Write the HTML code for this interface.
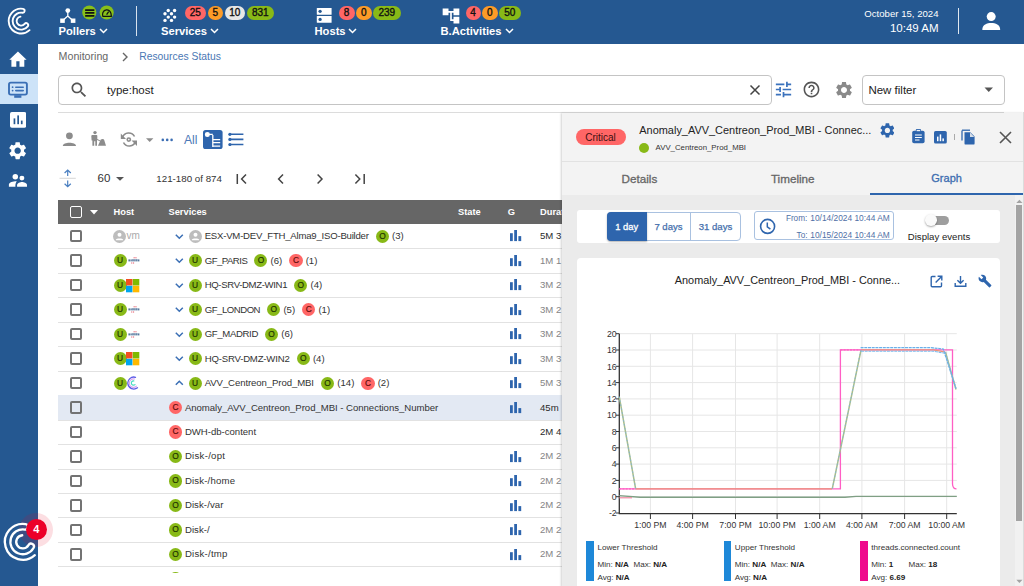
<!DOCTYPE html>
<html><head><meta charset="utf-8">
<style>
*{box-sizing:border-box;margin:0;padding:0}
html,body{width:1024px;height:586px;overflow:hidden;background:#fff;font-family:"Liberation Sans",sans-serif;color:#222}
.a{position:absolute}
#hdr{position:absolute;left:0;top:0;width:1024px;height:44px;background:#255891}
#side{position:absolute;left:0;top:44px;width:38px;height:542px;background:#255891}
.nav{position:absolute;color:#fff;font-weight:bold;font-size:11.2px;white-space:nowrap;line-height:12px}
.bdg{position:absolute;top:5.7px;height:14px;border-radius:7px;font-size:10px;line-height:14.4px;text-align:center;color:#111;-webkit-text-stroke:0.35px #111}
.r{background:#ff6666}.o{background:#fd9b27}.g{background:#e6e6e6}.gr{background:#88b917}
.t{position:absolute;white-space:nowrap}
.cb{position:absolute;width:13.2px;height:13.2px;border-radius:50%;font-size:8.4px;line-height:13.4px;text-align:center;-webkit-text-stroke:0.15px}
.chk{position:absolute;width:12.6px;height:12.6px;border:2px solid #737373;border-radius:2px}
.th{position:absolute;top:6.5px;color:#fff;font-weight:bold;font-size:9.3px;white-space:nowrap}
.tt{position:absolute;white-space:nowrap;font-size:9.6px;color:#333;line-height:12px}
.tab{position:absolute;top:172.4px;font-size:11.7px;color:#666;white-space:nowrap;line-height:13px;-webkit-text-stroke:0.3px}
.lg{position:absolute;white-space:nowrap;font-size:8.1px;color:#333;line-height:10px}
.lg b{color:#222}
</style></head><body>
<div id="hdr">
  <svg class="a" style="left:0;top:0" width="38" height="44">
    <path fill="none" stroke="#fff" stroke-width="1.9" stroke-linecap="round" d="M29.56 30.17 A12.40 12.40 0 1 1 23.04 8.85 A1.95 1.95 0 0 1 22.43 12.70 A8.50 8.50 0 1 0 27.80 26.33 A2.00 2.00 0 0 0 24.65 23.87 A4.50 4.50 0 1 1 20.47 16.64"/>
  </svg>
  <!-- Pollers -->
  <svg class="a" style="left:60px;top:8px" width="16" height="16" viewBox="0 0 16 16">
    <circle cx="7.8" cy="2.6" r="2.4" fill="#fff"/>
    <path d="M7.8 3 V8 L2.5 12.8 M7.8 8 L13 12.8" stroke="#fff" stroke-width="1.3" fill="none"/>
    <rect x="0.2" y="10.5" width="4.6" height="4.4" fill="#fff"/>
    <rect x="10.8" y="10.5" width="4.6" height="4.4" fill="#fff"/>
  </svg>
  <svg class="a" style="left:80px;top:4px" width="36" height="18" viewBox="0 0 36 18">
    <circle cx="9.3" cy="8.5" r="7.05" fill="#88c01a"/><circle cx="26.7" cy="8.5" r="7.05" fill="#88c01a"/>
    <g fill="#111"><rect x="5.1" y="5.3" width="9.3" height="1.7" rx="0.3"/><rect x="5.1" y="8.1" width="9.3" height="1.7" rx="0.3"/><rect x="5.1" y="11.1" width="9.3" height="1.7" rx="0.3"/></g>
    <path d="M22.8 12.3 C22.2 10.5 22.5 6.2 26.5 5.9 C29.5 5.8 30.5 8 31 9.5 L31.4 12.3 Z" fill="none" stroke="#111" stroke-width="1.2" stroke-linejoin="round"/>
    <path d="M26.6 10.6 L28.7 7.6" stroke="#111" stroke-width="1.3"/>
  </svg>
  <div class="nav" style="left:58.5px;top:25px">Pollers</div>
  <svg class="a" style="left:98.5px;top:28px" width="9" height="6"><path d="M1 1 L4.5 4.5 L8 1" stroke="#fff" stroke-width="1.5" fill="none"/></svg>
  <div class="a" style="left:136px;top:6px;width:1px;height:30px;background:#d8e2ee"></div>
  <!-- Services -->
  <svg class="a" style="left:158px;top:4px" width="24" height="24" viewBox="0 0 24 24">
    <g fill="#fff"><circle cx="10.25" cy="6.56" r="1.7"/><circle cx="16.6" cy="6.56" r="1.7"/>
    <circle cx="7" cy="9.8" r="1.7"/><circle cx="13.5" cy="9.8" r="1.7"/>
    <circle cx="10.25" cy="13.1" r="1.7"/><circle cx="16.6" cy="13.1" r="1.7"/>
    <circle cx="7" cy="16.4" r="1.7"/><circle cx="13.5" cy="16.4" r="1.7"/></g>
  </svg>
  <div class="bdg r" style="left:184.5px;width:21.5px">25</div>
  <div class="bdg o" style="left:207.5px;width:15.5px">5</div>
  <div class="bdg g" style="left:224.5px;width:20.5px">10</div>
  <div class="bdg gr" style="left:246.5px;width:27.5px">831</div>
  <div class="nav" style="left:161px;top:25px">Services</div>
  <svg class="a" style="left:210px;top:28px" width="9" height="6"><path d="M1 1 L4.5 4.5 L8 1" stroke="#fff" stroke-width="1.5" fill="none"/></svg>
  <!-- Hosts -->
  <svg class="a" style="left:310px;top:4px" width="30" height="22" viewBox="310 4 30 22">
    <rect x="316.8" y="7.9" width="14.8" height="6.8" rx="0.5" fill="#fff"/>
    <rect x="316.8" y="16.1" width="14.8" height="6.7" rx="0.5" fill="#fff"/>
    <circle cx="320.1" cy="11.3" r="1.65" fill="#255891"/><circle cx="320.1" cy="19.4" r="1.65" fill="#255891"/>
  </svg>
  <div class="bdg r" style="left:338.5px;width:16px">8</div>
  <div class="bdg o" style="left:356px;width:15.5px">0</div>
  <div class="bdg gr" style="left:373px;width:27.5px">239</div>
  <div class="nav" style="left:314.5px;top:25px">Hosts</div>
  <svg class="a" style="left:348px;top:28px" width="9" height="6"><path d="M1 1 L4.5 4.5 L8 1" stroke="#fff" stroke-width="1.5" fill="none"/></svg>
  <!-- BA -->
  <svg class="a" style="left:440.5px;top:5.9px" width="20" height="20" viewBox="0 0 24 24"><path fill="#fff" d="M22 11V3h-7v3H9V3H2v8h7V8h2v10h4v3h7v-8h-7v3h-2V8h2v3z"/></svg>
  <div class="bdg r" style="left:465.5px;width:15px">4</div>
  <div class="bdg o" style="left:482px;width:15.5px">0</div>
  <div class="bdg gr" style="left:499px;width:21.5px">50</div>
  <div class="nav" style="left:440.5px;top:25px">B.Activities</div>
  <svg class="a" style="left:505px;top:28px" width="9" height="6"><path d="M1 1 L4.5 4.5 L8 1" stroke="#fff" stroke-width="1.5" fill="none"/></svg>
  <!-- date -->
  <div class="t" style="right:85.5px;top:7.6px;color:#fff;font-size:9.6px">October 15, 2024</div>
  <div class="t" style="right:85.5px;top:22.4px;color:#fff;font-size:11.5px">10:49 AM</div>
  <div class="a" style="left:957.5px;top:8px;width:1px;height:26px;background:#e0e8f0"></div>
  <svg class="a" style="left:982px;top:12px" width="19" height="19" viewBox="0 0 19 19">
    <circle cx="9.2" cy="4.6" r="4.5" fill="#fff"/>
    <path d="M0.3 18 C0.3 12.5 5 11 9.2 11 C13.4 11 18.2 12.5 18.2 18 Z" fill="#fff"/>
  </svg>
</div>
<div id="side">
  <svg class="a" style="left:4px;top:2px" width="30" height="28" viewBox="4 46 30 28"><path d="M17.95 51.4 L26.6 59.7 H24.3 V66.8 H19.5 V61.3 H16.3 V66.8 H11.4 V59.7 H9.3 Z" fill="#fff"/></svg>
  <div class="a" style="left:0;top:30px;width:38px;height:30px;background:#cde3f8"></div>
  <svg class="a" style="left:4px;top:30px" width="30" height="30" viewBox="4 74 30 30">
    <rect x="9" y="82.6" width="17.9" height="12" rx="1.8" fill="none" stroke="#3a6fb5" stroke-width="1.9"/>
    <rect x="14.2" y="95.2" width="7.2" height="2.6" fill="#3a6fb5"/>
    <g fill="#3a6fb5"><circle cx="12.6" cy="87.2" r="0.9"/><circle cx="12.6" cy="90.6" r="0.9"/><rect x="15" y="86.4" width="9" height="1.6" rx="0.8"/><rect x="15" y="89.8" width="9" height="1.6" rx="0.8"/></g>
  </svg>
  <svg class="a" style="left:9.9px;top:68px" width="16.2" height="15.8" viewBox="0 0 16.2 15.8"><rect x="0" y="0" width="16.2" height="15.8" rx="1.8" fill="#fff"/><rect x="3.6" y="6.4" width="1.7" height="5.8" fill="#255891"/><rect x="7.3" y="3.4" width="1.7" height="8.8" fill="#255891"/><rect x="10.9" y="8.6" width="1.7" height="3.6" fill="#255891"/></svg>
  <svg class="a" style="left:7.15px;top:95.6px" width="21.3" height="21.3" viewBox="0 0 24 24"><path fill="#fff" d="M19.14 12.94c.04-.3.06-.61.06-.94 0-.32-.02-.64-.07-.94l2.03-1.58c.18-.14.23-.41.12-.61l-1.92-3.32c-.12-.22-.37-.29-.59-.22l-2.39.96c-.5-.38-1.03-.7-1.62-.94l-.36-2.54c-.04-.24-.24-.41-.48-.41h-3.84c-.24 0-.43.17-.47.41l-.36 2.54c-.59.24-1.13.57-1.62.94l-2.39-.96c-.22-.08-.47 0-.59.22L2.74 8.87c-.12.21-.08.47.12.61l2.03 1.58c-.05.3-.09.63-.09.94s.02.64.07.94l-2.03 1.58c-.18.14-.23.41-.12.61l1.92 3.32c.12.22.37.29.59.22l2.39-.96c.5.38 1.03.7 1.62.94l.36 2.54c.05.24.24.41.48.41h3.84c.24 0 .44-.17.47-.41l.36-2.54c.59-.24 1.13-.56 1.62-.94l2.39.96c.22.08.47 0 .59-.22l1.92-3.32c.12-.22.07-.47-.12-.61l-2.01-1.58zM12 15.6c-1.98 0-3.6-1.62-3.6-3.6s1.62-3.6 3.6-3.6 3.6 1.62 3.6 3.6-1.62 3.6-3.6 3.6z"/></svg>
  <svg class="a" style="left:4px;top:122px" width="30" height="30" viewBox="4 166 30 30"><g fill="#fff">
    <circle cx="15.3" cy="176.8" r="2.75"/><circle cx="21.9" cy="178.1" r="2.45"/>
    <path d="M8.9 186.7 V184.6 C8.9 182.2 13.5 181.1 16.8 181.2 C15.6 182.6 15.3 184.6 15.4 186.7 Z"/>
    <path d="M17.1 186.7 V185.2 C17.1 183 20.4 182.1 22 182.1 C23.8 182.1 27 183 27 185.2 V186.7 Z"/></g></svg>
  <div class="a" style="left:36.3px;top:485.5px;width:34px;height:34px;margin:-17px 0 0 -17px;border-radius:50%;background:rgba(232,0,30,0.13)"></div>
  <svg class="a" style="left:0;top:456px" width="40" height="86" viewBox="0 500 40 86">
    <path fill="none" stroke="#fff" stroke-width="2.3" stroke-linecap="round" d="M34.82 555.15 A17.96 17.96 0 1 1 25.61 524.06 A2.77 2.77 0 0 1 24.74 529.54 A12.41 12.41 0 1 0 33.55 548.00 A2.92 2.92 0 0 0 28.49 545.08 A6.57 6.57 0 1 1 22.23 535.26"/>
  </svg>
</div>
<div class="a" style="left:36.3px;top:529.5px;width:21.5px;height:21.5px;margin:-10.75px 0 0 -10.75px;border-radius:50%;background:#ec0028;color:#fff;font-size:11px;font-weight:bold;text-align:center;line-height:21.5px">4</div>
<!-- breadcrumb -->
<div class="t" style="left:58.6px;top:49.9px;font-size:10.65px;color:#666;line-height:12px">Monitoring</div>
<svg class="a" style="left:121px;top:51.5px" width="8" height="10"><path d="M2 1 L6 5 L2 9" stroke="#666" stroke-width="1.4" fill="none"/></svg>
<div class="t" style="left:139.2px;top:50.9px;font-size:10.35px;color:#4a77b4;line-height:12px">Resources Status</div>
<!-- search -->
<div class="a" style="left:58px;top:75px;width:714px;height:30px;border:1px solid #c4c4c4;border-radius:4px"></div>
<svg class="a" style="left:69px;top:80px" width="20" height="20" viewBox="0 0 24 24"><path fill="#555" d="M15.5 14h-.79l-.28-.27C15.41 12.59 16 11.11 16 9.5 16 5.91 13.09 3 9.5 3S3 5.91 3 9.5 5.91 16 9.5 16c1.61 0 3.09-.59 4.23-1.57l.27.28v.79l5 4.99L20.49 19l-4.99-5zm-6 0C7.01 14 5 11.99 5 9.5S7.01 5 9.5 5 14 7.01 14 9.5 11.99 14 9.5 14z"/></svg>
<div class="t" style="left:107px;top:84px;font-size:11.5px;color:#222">type:host</div>
<svg class="a" style="left:748px;top:83px" width="14" height="14" viewBox="0 0 14 14"><path d="M2.5 2.5 L11.5 11.5 M11.5 2.5 L2.5 11.5" stroke="#444" stroke-width="1.5"/></svg>
<svg class="a" style="left:774.5px;top:80.5px" width="17" height="17" viewBox="2 2 20 20"><path fill="#3b72bd" d="M3 17v2h6v-2H3zM3 5v2h10V5H3zm10 16v-2h8v-2h-8v-2h-2v6h2zM7 9v2H3v2h4v2h2V9H7zm14 4v-2H11v2h10zm-6-4h2V7h4V5h-4V3h-2v6z"/></svg>
<svg class="a" style="left:802px;top:80px" width="19" height="19" viewBox="0 0 24 24"><path fill="#555" d="M11 18h2v-2h-2v2zm1-16C6.48 2 2 6.48 2 12s4.48 10 10 10 10-4.48 10-10S17.52 2 12 2zm0 18c-4.41 0-8-3.59-8-8s3.59-8 8-8 8 3.59 8 8-3.59 8-8 8zm0-14c-2.21 0-4 1.79-4 4h2c0-1.1.9-2 2-2s2 .9 2 2c0 2-3 1.75-3 5h2c0-2.25 3-2.5 3-5 0-2.21-1.79-4-4-4z"/></svg>
<svg class="a" style="left:833.5px;top:80px" width="20" height="20" viewBox="0 0 24 24"><path fill="#8a8a8a" d="M19.14 12.94c.04-.3.06-.61.06-.94 0-.32-.02-.64-.07-.94l2.03-1.58c.18-.14.23-.41.12-.61l-1.92-3.32c-.12-.22-.37-.29-.59-.22l-2.39.96c-.5-.38-1.030-.7-1.62-.94l-.36-2.54c-.04-.24-.24-.41-.48-.41h-3.84c-.24 0-.43.17-.47.41l-.36 2.54c-.59.24-1.13.57-1.62.94l-2.39-.96c-.22-.08-.47 0-.59.22L2.74 8.87c-.12.21-.08.47.12.61l2.03 1.58c-.05.3-.09.63-.09.94s.02.64.07.94l-2.03 1.58c-.18.14-.23.41-.12.61l1.92 3.32c.12.22.37.29.59.22l2.39-.96c.5.38 1.03.7 1.62.94l.36 2.54c.05.24.24.41.48.41h3.84c.24 0 .44-.17.47-.41l.36-2.54c.59-.24 1.13-.56 1.62-.94l2.39.96c.22.08.47 0 .59-.22l1.92-3.32c.12-.22.07-.47-.12-.61l-2.01-1.58zM12 15.6c-1.98 0-3.6-1.62-3.6-3.6s1.62-3.6 3.6-3.6 3.6 1.62 3.6 3.6-1.62 3.6-3.6 3.6z"/></svg>
<div class="a" style="left:861.5px;top:75px;width:143px;height:30px;border:1px solid #c4c4c4;border-radius:4px"></div>
<div class="t" style="left:868.4px;top:83.6px;font-size:11.5px;color:#222">New filter</div>
<svg class="a" style="left:984px;top:87px" width="10" height="6"><path d="M0.5 0.5 H9 L4.75 5 Z" fill="#555"/></svg>
<div class="a" style="left:58px;top:112px;width:946px;height:1px;background:#dcdcdc"></div>
<!-- toolbar -->
<svg class="a" style="left:62px;top:131px" width="15" height="16" viewBox="0 0 15 16"><circle cx="7.4" cy="4.8" r="3.4" fill="#8c8c8c"/><path d="M0.8 15 C0.8 10.6 14 10.6 14 15 Z" fill="#8c8c8c"/></svg>
<svg class="a" style="left:86px;top:128px" width="24" height="22" viewBox="86 128 24 22"><g fill="#8c8c8c"><circle cx="95" cy="132.6" r="1.7"/><path d="M92.3 135 H96.6 Q97.3 135 97.3 135.8 V139 L100.3 140.6 L99.9 141.3 L97 140 V145.8 H95.3 V141.2 H94.2 V145.8 H92.4 V140.6 L91.6 140.4 L91.3 136 Q91.4 135 92.3 135 Z"/><path d="M98 145.8 L100.6 139.8 Q101.5 138.9 102.9 139 Q103.7 139.2 104.2 140 L106 145.8 Z"/></g></svg>
<svg class="a" style="left:119.5px;top:131px" width="18" height="17" viewBox="0 0 18 17"><g fill="none" stroke="#8c8c8c" stroke-width="1.6"><path d="M2.5 6.5 A6.5 6.5 0 0 1 14.5 5.5"/><path d="M15.5 10.5 A6.5 6.5 0 0 1 3.5 11.5"/><circle cx="8.8" cy="8.6" r="1.6"/></g><path d="M0.8 2.5 V8 H6 Z" fill="#8c8c8c"/><path d="M17 15 V9.5 H11.5 Z" fill="#8c8c8c"/></svg>
<svg class="a" style="left:145.5px;top:137.5px" width="8" height="5"><path d="M0 0.2 H7.4 L3.7 4 Z" fill="#8c8c8c"/></svg>
<svg class="a" style="left:161px;top:138.2px" width="13" height="4"><g fill="#3a6db3"><circle cx="1.8" cy="1.9" r="1.3"/><circle cx="6.2" cy="1.9" r="1.3"/><circle cx="10.6" cy="1.9" r="1.3"/></g></svg>
<div class="t" style="left:184px;top:133px;font-size:12.1px;color:#4b78b7">All</div>
<svg class="a" style="left:203.3px;top:129.9px" width="20" height="19.2" viewBox="0 0 20 19.2"><rect x="0" y="0" width="19.6" height="19" rx="2.6" fill="#2e65ad"/><circle cx="4.4" cy="4.4" r="2.5" fill="#fff"/><path d="M9.8 5 V17 M9.8 9.7 H17.2 M9.8 12.7 H17.2 M9.8 16.1 H17.2" stroke="#fff" stroke-width="1.3" fill="none"/><path d="M4.4 4.4 H9.8" stroke="#fff" stroke-width="1.3"/></svg>
<svg class="a" style="left:228px;top:132px" width="16" height="14" viewBox="0 0 16 14"><g fill="#2e65ad"><circle cx="1.9" cy="2.3" r="1.6"/><circle cx="1.9" cy="7.4" r="1.6"/><circle cx="1.9" cy="12.5" r="1.6"/></g><path d="M2 2.3 H15.4 M2 7.4 H15.4 M2 12.5 H15.4" stroke="#2e65ad" stroke-width="1.6"/></svg>
<!-- pagination -->
<svg class="a" style="left:59px;top:169px" width="17" height="19" viewBox="0 0 17 19"><path d="M8.7 1.2 V7 M5.6 4 L8.7 1 L11.8 4" stroke="#4a7fc1" stroke-width="1.2" fill="none"/><path d="M8.7 11.5 V17.5 M5.6 14.7 L8.7 17.7 L11.8 14.7" stroke="#4a7fc1" stroke-width="1.2" fill="none"/><path d="M0.5 9.3 H16.8" stroke="#ccc" stroke-width="0.8"/></svg>
<div class="t" style="left:97.6px;top:172px;font-size:11.5px;color:#333">60</div>
<svg class="a" style="left:116px;top:177px" width="9" height="5"><path d="M0 0 H8 L4 3.8 Z" fill="#555"/></svg>
<div class="t" style="left:156.3px;top:172.6px;font-size:9.75px;color:#333">121-180 of 874</div>
<svg class="a" style="left:235px;top:173px" width="14" height="12" viewBox="0 0 14 12"><path d="M2.3 1 V11 M11 1.4 L6.6 6 L11 10.6" stroke="#444" stroke-width="1.5" fill="none"/></svg>
<svg class="a" style="left:275px;top:173px" width="12" height="12" viewBox="0 0 12 12"><path d="M8 1.4 L3.6 6 L8 10.6" stroke="#444" stroke-width="1.5" fill="none"/></svg>
<svg class="a" style="left:313.5px;top:173px" width="12" height="12" viewBox="0 0 12 12"><path d="M3.6 1.4 L8 6 L3.6 10.6" stroke="#444" stroke-width="1.5" fill="none"/></svg>
<svg class="a" style="left:352.5px;top:173px" width="14" height="12" viewBox="0 0 14 12"><path d="M2.4 1.4 L6.8 6 L2.4 10.6 M11.2 1 V11" stroke="#444" stroke-width="1.5" fill="none"/></svg>
<div id="tbl" class="a" style="left:58px;top:200px;width:504px;height:373.3px;overflow:hidden">
<div class="a" style="left:0;top:0;width:504px;height:24.3px;background:#666"></div>
<div class="chk" style="left:11.6px;top:5.8px;border-color:#fff;border-width:1.6px"></div>
<svg class="a" style="left:32px;top:10px" width="8" height="5"><path d="M0 0 H8 L4 4.5 Z" fill="#fff"/></svg>
<div class="th" style="left:55.5px">Host</div>
<div class="th" style="left:110.5px">Services</div>
<div class="th" style="left:400px">State</div>
<div class="th" style="left:449.8px">G</div>
<div class="th" style="left:482px">Duration</div>
<div class="a" style="left:0;top:48.18px;width:504px;height:1px;background:#e2e2e2"></div>
<div class="chk" style="left:11.6px;top:29.84px"></div>
<svg class="a" style="left:55.30px;top:29.64px" width="13" height="13" viewBox="0 0 13 13"><circle cx="6.5" cy="6.5" r="6.5" fill="#bdbdbd"/><circle cx="6.5" cy="4.8" r="2" fill="#fff"/><path d="M2.8 9.8 C3.2 7.9 9.8 7.9 10.2 9.8 V10.3 H2.8 Z" fill="#fff"/></svg>
<div class="tt" style="left:68.5px;top:30.14px;color:#aaa;font-size:10px">vm</div>
<svg class="a" style="left:116.5px;top:33.64px" width="9" height="6"><path d="M0.8 0.8 L4.3 4.3 L7.8 0.8" stroke="#3b6fb5" stroke-width="1.5" fill="none"/></svg>
<svg class="a" style="left:130.50px;top:29.64px" width="13" height="13" viewBox="0 0 13 13"><circle cx="6.5" cy="6.5" r="6.5" fill="#bdbdbd"/><circle cx="6.5" cy="4.8" r="2" fill="#fff"/><path d="M2.8 9.8 C3.2 7.9 9.8 7.9 10.2 9.8 V10.3 H2.8 Z" fill="#fff"/></svg>
<div class="tt" style="left:146.70px;top:30.14px;letter-spacing:-0.223px">ESX-VM-DEV_FTH_Alma9_ISO-Builder</div>
<div class="cb" style="left:317.80px;top:29.64px;background:#88b917;color:#1c3000">O</div>
<div class="tt" style="left:334.10px;top:30.14px">(3)</div>
<svg class="a" style="left:451.60px;top:30.44px" width="12" height="12" viewBox="0 0 12 12"><rect x="0" y="3.2" width="2.8" height="7.9" fill="#2e65ad"/><rect x="4.2" y="0" width="2.8" height="11.1" fill="#2e65ad"/><rect x="8.4" y="6.1" width="2.8" height="5" fill="#2e65ad"/></svg>
<div class="tt" style="left:482px;top:30.14px;color:#2a2a2a">5M 3</div>
<div class="a" style="left:0;top:72.66px;width:504px;height:1px;background:#e2e2e2"></div>
<div class="chk" style="left:11.6px;top:54.32px"></div>
<div class="cb" style="left:55.50px;top:54.12px;background:#88b917;color:#1c3000">U</div>
<svg class="a" style="left:69.5px;top:56.12px" width="12" height="9" viewBox="0 0 12 9"><g fill="#3d6590" opacity="0.85"><rect x="0.4" y="3.4" width="1.6" height="2"/><rect x="2.4" y="3.4" width="1.4" height="2"/><rect x="4.2" y="3.2" width="1.6" height="2.2"/><rect x="6.2" y="3.2" width="1.5" height="2.2"/><rect x="8.1" y="3.2" width="1.5" height="2.2"/><rect x="10" y="3.4" width="1.4" height="2"/></g><g fill="#e8707e" opacity="0.85"><rect x="5.6" y="1" width="1.1" height="1.4"/><rect x="7.4" y="1" width="1.1" height="1.4"/><rect x="3.2" y="6.3" width="1.1" height="1.4"/><rect x="5" y="6.3" width="1.1" height="1.4"/></g></svg>
<svg class="a" style="left:116.5px;top:58.12px" width="9" height="6"><path d="M0.8 0.8 L4.3 4.3 L7.8 0.8" stroke="#3b6fb5" stroke-width="1.5" fill="none"/></svg>
<div class="cb" style="left:130.50px;top:54.12px;background:#88b917;color:#1c3000">U</div>
<div class="tt" style="left:146.70px;top:54.62px;letter-spacing:-0.521px">GF_PARIS</div>
<div class="cb" style="left:196.30px;top:54.12px;background:#88b917;color:#1c3000">O</div>
<div class="tt" style="left:212.60px;top:54.62px">(6)</div>
<div class="cb" style="left:231.33px;top:54.12px;background:#ff6666;color:#5a0a0a">C</div>
<div class="tt" style="left:247.63px;top:54.62px">(1)</div>
<svg class="a" style="left:451.60px;top:54.92px" width="12" height="12" viewBox="0 0 12 12"><rect x="0" y="3.2" width="2.8" height="7.9" fill="#2e65ad"/><rect x="4.2" y="0" width="2.8" height="11.1" fill="#2e65ad"/><rect x="8.4" y="6.1" width="2.8" height="5" fill="#2e65ad"/></svg>
<div class="tt" style="left:482px;top:54.62px;color:#858585">1M 1</div>
<div class="a" style="left:0;top:97.14px;width:504px;height:1px;background:#e2e2e2"></div>
<div class="chk" style="left:11.6px;top:78.80px"></div>
<div class="cb" style="left:55.50px;top:78.60px;background:#88b917;color:#1c3000">U</div>
<svg class="a" style="left:68.4px;top:78.50px" width="14" height="14" viewBox="0 0 14 14"><rect x="0" y="0" width="6.5" height="6.5" fill="#f25022"/><rect x="6.8" y="0" width="6.5" height="6.5" fill="#7fba00"/><rect x="0" y="6.8" width="6.5" height="6.5" fill="#00a4ef"/><rect x="6.8" y="6.8" width="6.5" height="6.5" fill="#ffb900"/></svg>
<svg class="a" style="left:116.5px;top:82.60px" width="9" height="6"><path d="M0.8 0.8 L4.3 4.3 L7.8 0.8" stroke="#3b6fb5" stroke-width="1.5" fill="none"/></svg>
<div class="cb" style="left:130.50px;top:78.60px;background:#88b917;color:#1c3000">U</div>
<div class="tt" style="left:146.70px;top:79.10px;letter-spacing:-0.355px">HQ-SRV-DMZ-WIN1</div>
<div class="cb" style="left:236.20px;top:78.60px;background:#88b917;color:#1c3000">O</div>
<div class="tt" style="left:252.50px;top:79.10px">(4)</div>
<svg class="a" style="left:451.60px;top:79.40px" width="12" height="12" viewBox="0 0 12 12"><rect x="0" y="3.2" width="2.8" height="7.9" fill="#2e65ad"/><rect x="4.2" y="0" width="2.8" height="11.1" fill="#2e65ad"/><rect x="8.4" y="6.1" width="2.8" height="5" fill="#2e65ad"/></svg>
<div class="tt" style="left:482px;top:79.10px;color:#858585">3M 2</div>
<div class="a" style="left:0;top:121.62px;width:504px;height:1px;background:#e2e2e2"></div>
<div class="chk" style="left:11.6px;top:103.28px"></div>
<div class="cb" style="left:55.50px;top:103.08px;background:#88b917;color:#1c3000">U</div>
<svg class="a" style="left:69.5px;top:105.08px" width="12" height="9" viewBox="0 0 12 9"><g fill="#3d6590" opacity="0.85"><rect x="0.4" y="3.4" width="1.6" height="2"/><rect x="2.4" y="3.4" width="1.4" height="2"/><rect x="4.2" y="3.2" width="1.6" height="2.2"/><rect x="6.2" y="3.2" width="1.5" height="2.2"/><rect x="8.1" y="3.2" width="1.5" height="2.2"/><rect x="10" y="3.4" width="1.4" height="2"/></g><g fill="#e8707e" opacity="0.85"><rect x="5.6" y="1" width="1.1" height="1.4"/><rect x="7.4" y="1" width="1.1" height="1.4"/><rect x="3.2" y="6.3" width="1.1" height="1.4"/><rect x="5" y="6.3" width="1.1" height="1.4"/></g></svg>
<svg class="a" style="left:116.5px;top:107.08px" width="9" height="6"><path d="M0.8 0.8 L4.3 4.3 L7.8 0.8" stroke="#3b6fb5" stroke-width="1.5" fill="none"/></svg>
<div class="cb" style="left:130.50px;top:103.08px;background:#88b917;color:#1c3000">U</div>
<div class="tt" style="left:146.70px;top:103.58px;letter-spacing:-0.482px">GF_LONDON</div>
<div class="cb" style="left:209.10px;top:103.08px;background:#88b917;color:#1c3000">O</div>
<div class="tt" style="left:225.40px;top:103.58px">(5)</div>
<div class="cb" style="left:244.13px;top:103.08px;background:#ff6666;color:#5a0a0a">C</div>
<div class="tt" style="left:260.43px;top:103.58px">(1)</div>
<svg class="a" style="left:451.60px;top:103.88px" width="12" height="12" viewBox="0 0 12 12"><rect x="0" y="3.2" width="2.8" height="7.9" fill="#2e65ad"/><rect x="4.2" y="0" width="2.8" height="11.1" fill="#2e65ad"/><rect x="8.4" y="6.1" width="2.8" height="5" fill="#2e65ad"/></svg>
<div class="tt" style="left:482px;top:103.58px;color:#858585">3M 2</div>
<div class="a" style="left:0;top:146.10px;width:504px;height:1px;background:#e2e2e2"></div>
<div class="chk" style="left:11.6px;top:127.76px"></div>
<div class="cb" style="left:55.50px;top:127.56px;background:#88b917;color:#1c3000">U</div>
<svg class="a" style="left:69.5px;top:129.56px" width="12" height="9" viewBox="0 0 12 9"><g fill="#3d6590" opacity="0.85"><rect x="0.4" y="3.4" width="1.6" height="2"/><rect x="2.4" y="3.4" width="1.4" height="2"/><rect x="4.2" y="3.2" width="1.6" height="2.2"/><rect x="6.2" y="3.2" width="1.5" height="2.2"/><rect x="8.1" y="3.2" width="1.5" height="2.2"/><rect x="10" y="3.4" width="1.4" height="2"/></g><g fill="#e8707e" opacity="0.85"><rect x="5.6" y="1" width="1.1" height="1.4"/><rect x="7.4" y="1" width="1.1" height="1.4"/><rect x="3.2" y="6.3" width="1.1" height="1.4"/><rect x="5" y="6.3" width="1.1" height="1.4"/></g></svg>
<svg class="a" style="left:116.5px;top:131.56px" width="9" height="6"><path d="M0.8 0.8 L4.3 4.3 L7.8 0.8" stroke="#3b6fb5" stroke-width="1.5" fill="none"/></svg>
<div class="cb" style="left:130.50px;top:127.56px;background:#88b917;color:#1c3000">U</div>
<div class="tt" style="left:146.70px;top:128.06px;letter-spacing:-0.359px">GF_MADRID</div>
<div class="cb" style="left:207.00px;top:127.56px;background:#88b917;color:#1c3000">O</div>
<div class="tt" style="left:223.30px;top:128.06px">(6)</div>
<svg class="a" style="left:451.60px;top:128.36px" width="12" height="12" viewBox="0 0 12 12"><rect x="0" y="3.2" width="2.8" height="7.9" fill="#2e65ad"/><rect x="4.2" y="0" width="2.8" height="11.1" fill="#2e65ad"/><rect x="8.4" y="6.1" width="2.8" height="5" fill="#2e65ad"/></svg>
<div class="tt" style="left:482px;top:128.06px;color:#858585">3M 2</div>
<div class="a" style="left:0;top:170.58px;width:504px;height:1px;background:#e2e2e2"></div>
<div class="chk" style="left:11.6px;top:152.24px"></div>
<div class="cb" style="left:55.50px;top:152.04px;background:#88b917;color:#1c3000">U</div>
<svg class="a" style="left:68.4px;top:151.94px" width="14" height="14" viewBox="0 0 14 14"><rect x="0" y="0" width="6.5" height="6.5" fill="#f25022"/><rect x="6.8" y="0" width="6.5" height="6.5" fill="#7fba00"/><rect x="0" y="6.8" width="6.5" height="6.5" fill="#00a4ef"/><rect x="6.8" y="6.8" width="6.5" height="6.5" fill="#ffb900"/></svg>
<svg class="a" style="left:116.5px;top:156.04px" width="9" height="6"><path d="M0.8 0.8 L4.3 4.3 L7.8 0.8" stroke="#3b6fb5" stroke-width="1.5" fill="none"/></svg>
<div class="cb" style="left:130.50px;top:152.04px;background:#88b917;color:#1c3000">U</div>
<div class="tt" style="left:146.70px;top:152.54px;letter-spacing:-0.195px">HQ-SRV-DMZ-WIN2</div>
<div class="cb" style="left:238.60px;top:152.04px;background:#88b917;color:#1c3000">O</div>
<div class="tt" style="left:254.90px;top:152.54px">(4)</div>
<svg class="a" style="left:451.60px;top:152.84px" width="12" height="12" viewBox="0 0 12 12"><rect x="0" y="3.2" width="2.8" height="7.9" fill="#2e65ad"/><rect x="4.2" y="0" width="2.8" height="11.1" fill="#2e65ad"/><rect x="8.4" y="6.1" width="2.8" height="5" fill="#2e65ad"/></svg>
<div class="tt" style="left:482px;top:152.54px;color:#858585">3M 3</div>
<div class="a" style="left:0;top:195.06px;width:504px;height:1px;background:#e2e2e2"></div>
<div class="chk" style="left:11.6px;top:176.72px"></div>
<div class="cb" style="left:55.50px;top:176.52px;background:#88b917;color:#1c3000">U</div>
<svg class="a" style="left:68px;top:176.02px" width="13" height="14" viewBox="0 0 13 14"><path d="M9.5 1.3 A6 6 0 1 0 11.5 11.8" fill="none" stroke="#5a5ae6" stroke-width="1.3" stroke-linecap="round"/><path d="M8.5 3 A4.2 4.2 0 1 0 10.3 10.2" fill="none" stroke="#d8a8f2" stroke-width="1.2" stroke-linecap="round"/><path d="M7.8 4.8 A2.2 2.2 0 1 0 9 8.6" fill="none" stroke="#45dcc0" stroke-width="1.2" stroke-linecap="round"/></svg>
<svg class="a" style="left:116.5px;top:179.72px" width="9" height="6"><path d="M0.8 4.8 L4.3 1.3 L7.8 4.8" stroke="#3b6fb5" stroke-width="1.5" fill="none"/></svg>
<div class="cb" style="left:130.50px;top:176.52px;background:#88b917;color:#1c3000">U</div>
<div class="tt" style="left:146.70px;top:177.02px;letter-spacing:-0.097px">AVV_Centreon_Prod_MBI</div>
<div class="cb" style="left:263.00px;top:176.52px;background:#88b917;color:#1c3000">O</div>
<div class="tt" style="left:279.30px;top:177.02px">(14)</div>
<div class="cb" style="left:303.37px;top:176.52px;background:#ff6666;color:#5a0a0a">C</div>
<div class="tt" style="left:319.67px;top:177.02px">(2)</div>
<svg class="a" style="left:451.60px;top:177.32px" width="12" height="12" viewBox="0 0 12 12"><rect x="0" y="3.2" width="2.8" height="7.9" fill="#2e65ad"/><rect x="4.2" y="0" width="2.8" height="11.1" fill="#2e65ad"/><rect x="8.4" y="6.1" width="2.8" height="5" fill="#2e65ad"/></svg>
<div class="tt" style="left:482px;top:177.02px;color:#858585">5M 3</div>
<div class="a" style="left:0;top:195.26px;width:504px;height:24.48px;background:#e3e9f3"></div>
<div class="a" style="left:0;top:219.54px;width:504px;height:1px;background:#e2e2e2"></div>
<div class="chk" style="left:11.6px;top:201.20px"></div>
<div class="cb" style="left:110.90px;top:201.00px;background:#ff6666;color:#5a0a0a">C</div>
<div class="tt" style="left:126.9px;top:201.50px;letter-spacing:-0.040px">Anomaly_AVV_Centreon_Prod_MBI - Connections_Number</div>
<svg class="a" style="left:451.60px;top:201.80px" width="12" height="12" viewBox="0 0 12 12"><rect x="0" y="3.2" width="2.8" height="7.9" fill="#2e65ad"/><rect x="4.2" y="0" width="2.8" height="11.1" fill="#2e65ad"/><rect x="8.4" y="6.1" width="2.8" height="5" fill="#2e65ad"/></svg>
<div class="tt" style="left:482px;top:201.50px;color:#2a2a2a">45m</div>
<div class="a" style="left:0;top:244.02px;width:504px;height:1px;background:#e2e2e2"></div>
<div class="chk" style="left:11.6px;top:225.68px"></div>
<div class="cb" style="left:110.90px;top:225.48px;background:#ff6666;color:#5a0a0a">C</div>
<div class="tt" style="left:126.9px;top:225.98px;letter-spacing:-0.020px">DWH-db-content</div>
<div class="tt" style="left:482px;top:225.98px;color:#2a2a2a">2M 4</div>
<div class="a" style="left:0;top:268.50px;width:504px;height:1px;background:#e2e2e2"></div>
<div class="chk" style="left:11.6px;top:250.16px"></div>
<div class="cb" style="left:110.90px;top:249.96px;background:#88b917;color:#1c3000">O</div>
<div class="tt" style="left:126.9px;top:250.46px;letter-spacing:0.281px">Disk-/opt</div>
<svg class="a" style="left:451.60px;top:250.76px" width="12" height="12" viewBox="0 0 12 12"><rect x="0" y="3.2" width="2.8" height="7.9" fill="#2e65ad"/><rect x="4.2" y="0" width="2.8" height="11.1" fill="#2e65ad"/><rect x="8.4" y="6.1" width="2.8" height="5" fill="#2e65ad"/></svg>
<div class="tt" style="left:482px;top:250.46px;color:#858585">2M 2</div>
<div class="a" style="left:0;top:292.98px;width:504px;height:1px;background:#e2e2e2"></div>
<div class="chk" style="left:11.6px;top:274.64px"></div>
<div class="cb" style="left:110.90px;top:274.44px;background:#88b917;color:#1c3000">O</div>
<div class="tt" style="left:126.9px;top:274.94px;letter-spacing:0.176px">Disk-/home</div>
<svg class="a" style="left:451.60px;top:275.24px" width="12" height="12" viewBox="0 0 12 12"><rect x="0" y="3.2" width="2.8" height="7.9" fill="#2e65ad"/><rect x="4.2" y="0" width="2.8" height="11.1" fill="#2e65ad"/><rect x="8.4" y="6.1" width="2.8" height="5" fill="#2e65ad"/></svg>
<div class="tt" style="left:482px;top:274.94px;color:#858585">2M 2</div>
<div class="a" style="left:0;top:317.46px;width:504px;height:1px;background:#e2e2e2"></div>
<div class="chk" style="left:11.6px;top:299.12px"></div>
<div class="cb" style="left:110.90px;top:298.92px;background:#88b917;color:#1c3000">O</div>
<div class="tt" style="left:126.9px;top:299.42px;letter-spacing:0.082px">Disk-/var</div>
<svg class="a" style="left:451.60px;top:299.72px" width="12" height="12" viewBox="0 0 12 12"><rect x="0" y="3.2" width="2.8" height="7.9" fill="#2e65ad"/><rect x="4.2" y="0" width="2.8" height="11.1" fill="#2e65ad"/><rect x="8.4" y="6.1" width="2.8" height="5" fill="#2e65ad"/></svg>
<div class="tt" style="left:482px;top:299.42px;color:#858585">2M 2</div>
<div class="a" style="left:0;top:341.94px;width:504px;height:1px;background:#e2e2e2"></div>
<div class="chk" style="left:11.6px;top:323.60px"></div>
<div class="cb" style="left:110.90px;top:323.40px;background:#88b917;color:#1c3000">O</div>
<div class="tt" style="left:126.9px;top:323.90px;letter-spacing:0.062px">Disk-/</div>
<svg class="a" style="left:451.60px;top:324.20px" width="12" height="12" viewBox="0 0 12 12"><rect x="0" y="3.2" width="2.8" height="7.9" fill="#2e65ad"/><rect x="4.2" y="0" width="2.8" height="11.1" fill="#2e65ad"/><rect x="8.4" y="6.1" width="2.8" height="5" fill="#2e65ad"/></svg>
<div class="tt" style="left:482px;top:323.90px;color:#858585">2M 2</div>
<div class="a" style="left:0;top:366.42px;width:504px;height:1px;background:#e2e2e2"></div>
<div class="chk" style="left:11.6px;top:348.08px"></div>
<div class="cb" style="left:110.90px;top:347.88px;background:#88b917;color:#1c3000">O</div>
<div class="tt" style="left:126.9px;top:348.38px;letter-spacing:0.252px">Disk-/tmp</div>
<svg class="a" style="left:451.60px;top:348.68px" width="12" height="12" viewBox="0 0 12 12"><rect x="0" y="3.2" width="2.8" height="7.9" fill="#2e65ad"/><rect x="4.2" y="0" width="2.8" height="11.1" fill="#2e65ad"/><rect x="8.4" y="6.1" width="2.8" height="5" fill="#2e65ad"/></svg>
<div class="tt" style="left:482px;top:348.38px;color:#858585">2M 2</div>
<div class="a" style="left:0;top:390.90px;width:504px;height:1px;background:#e2e2e2"></div>
<div class="chk" style="left:11.6px;top:372.56px"></div>
<div class="cb" style="left:110.90px;top:372.36px;background:#88b917;color:#1c3000">O</div>
<div class="tt" style="left:126.9px;top:372.86px">Disk-/usr</div>
<svg class="a" style="left:451.60px;top:373.16px" width="12" height="12" viewBox="0 0 12 12"><rect x="0" y="3.2" width="2.8" height="7.9" fill="#2e65ad"/><rect x="4.2" y="0" width="2.8" height="11.1" fill="#2e65ad"/><rect x="8.4" y="6.1" width="2.8" height="5" fill="#2e65ad"/></svg>
<div class="tt" style="left:482px;top:372.86px;color:#858585">2M 2</div>
</div>

<!--PANEL-->
<!-- panel -->
<div class="a" style="left:562px;top:112.5px;width:462px;height:474px;background:#f3f3f3;box-shadow:-1px -0.5px 2px rgba(0,0,0,0.18)"></div>
<div class="a" style="left:562px;top:195px;width:462px;height:391px;background:#ebebeb"></div>
<div class="a" style="left:562px;top:161px;width:462px;height:1px;background:#e2e2e2"></div>
<div class="a" style="left:575.5px;top:129px;width:50px;height:16.2px;border-radius:8.1px;background:#ff6666;color:#3a1010;font-size:10px;line-height:17.6px;text-align:center">Critical</div>
<div class="t" style="left:639.3px;top:123.2px;font-size:10.94px;color:#222;line-height:14px">Anomaly_AVV_Centreon_Prod_MBI - Connec...</div>
<div class="a" style="left:638.5px;top:143px;width:10px;height:10px;border-radius:50%;background:#88b917"></div>
<div class="t" style="left:655.6px;top:143px;font-size:7.8px;color:#333;line-height:10px">AVV_Centreon_Prod_MBI</div>
<svg class="a" style="left:879.5px;top:123.3px" width="14.8" height="14.8" viewBox="2 2 20 20"><path fill="#2e65ad" d="M19.14 12.94c.04-.3.06-.61.06-.94 0-.32-.02-.64-.07-.94l2.03-1.58c.18-.14.23-.41.12-.61l-1.92-3.32c-.12-.22-.37-.29-.59-.22l-2.39.96c-.5-.38-1.03-.7-1.62-.94l-.36-2.54c-.04-.24-.24-.41-.48-.41h-3.840c-.24 0-.43.17-.47.41l-.36 2.54c-.59.24-1.13.57-1.62.94l-2.39-.96c-.22-.08-.47 0-.59.22L2.74 8.87c-.12.21-.08.47.12.61l2.03 1.58c-.05.3-.09.63-.09.94s.02.64.07.94l-2.03 1.58c-.18.14-.23.41-.12.61l1.92 3.32c.12.22.37.29.59.22l2.39-.96c.5.38 1.03.7 1.62.94l.36 2.54c.05.24.24.41.48.41h3.84c.24 0 .44-.17.47-.41l.36-2.54c.59-.24 1.13-.56 1.62-.94l2.39.96c.22.08.47 0 .59-.22l1.920-3.32c.12-.22.07-.47-.12-.61l-2.01-1.58zM12 15.6c-1.98 0-3.6-1.62-3.6-3.6s1.62-3.6 3.6-3.6 3.6 1.62 3.6 3.6-1.62 3.6-3.6 3.6z"/></svg>
<svg class="a" style="left:911.5px;top:129.3px" width="13" height="14.5" viewBox="0 0 13 14.5"><rect x="0.2" y="1.8" width="12.4" height="12.5" rx="1.8" fill="#2e65ad"/><rect x="3.8" y="0" width="5.2" height="3.2" rx="1" fill="#2e65ad"/><rect x="4.6" y="0.9" width="3.6" height="1.3" fill="#f3f3f3"/><path d="M3 6 H9.8 M3 8.5 H9.8 M3 11 H7.5" stroke="#fff" stroke-width="1.2"/></svg>
<svg class="a" style="left:934.4px;top:130.7px" width="13" height="13" viewBox="0 0 13 13"><rect x="0" y="0" width="12.8" height="12.6" rx="1.6" fill="#2e65ad"/><rect x="3" y="5.6" width="1.5" height="4.6" fill="#fff"/><rect x="5.7" y="3.4" width="1.5" height="6.8" fill="#fff"/><rect x="8.4" y="7.4" width="1.5" height="2.8" fill="#fff"/></svg>
<div class="a" style="left:953.8px;top:134px;width:1px;height:6px;background:#aaa"></div>
<svg class="a" style="left:960.5px;top:129px" width="14" height="16" viewBox="0 0 14 16"><path d="M1 1.5 V11.5" stroke="#2e65ad" stroke-width="1.3"/><path d="M1 1.2 H9" stroke="#2e65ad" stroke-width="1.3"/><path d="M3.5 3.2 H9.3 L13.6 7.6 V14.4 A1.2 1.2 0 0 1 12.4 15.6 H4.7 A1.2 1.2 0 0 1 3.5 14.4 Z" fill="#2e65ad"/><path d="M9 3.5 V7.9 H13.3 Z" fill="#f3f3f3" opacity="0.85"/></svg>
<svg class="a" style="left:999px;top:131px" width="13" height="13" viewBox="0 0 13 13"><path d="M1 1 L12 12 M12 1 L1 12" stroke="#555" stroke-width="1.6"/></svg>
<div class="tab" style="left:621.5px">Details</div>
<div class="tab" style="left:770.9px">Timeline</div>
<div class="tab" style="left:931.3px;color:#3d6db0;font-size:11px">Graph</div>
<div class="a" style="left:869.6px;top:193px;width:153.4px;height:2px;background:#2e65ad"></div>
<div class="a" style="left:1014.5px;top:195px;width:8.5px;height:391px;background:#f1f1f1"></div>
<svg class="a" style="left:1015.5px;top:198.5px" width="7" height="5"><path d="M0.3 4 H6.5 L3.4 0.8 Z" fill="#a3a3a3"/></svg>
<div class="a" style="left:1016px;top:205.2px;width:5.6px;height:316px;background:#a3a3a3"></div>
<svg class="a" style="left:1015.5px;top:578.5px" width="7" height="5"><path d="M0.3 0.8 H6.5 L3.4 4 Z" fill="#a3a3a3"/></svg>
<div class="a" style="left:1023px;top:112px;width:1px;height:474px;background:#dcdcdc"></div>
<div class="a" style="left:576.6px;top:210.2px;width:423.4px;height:32.6px;background:#fff;border-radius:3px"></div>
<div class="a" style="left:607px;top:211.6px;width:133.6px;height:29px;border:1px solid #a9c1e0;border-radius:4px"></div>
<div class="a" style="left:690px;top:211.6px;width:1px;height:29px;background:#a9c1e0"></div>
<div class="a" style="left:607px;top:211.6px;width:39.8px;height:29px;background:#2e65ad;border-radius:4px 0 0 4px;box-shadow:0 1px 2px rgba(0,0,0,0.3)"></div>
<div class="t" style="left:615.3px;top:220.6px;font-size:9.4px;color:#fff;line-height:12px;-webkit-text-stroke:0.3px">1 day</div>
<div class="t" style="left:654.4px;top:220.6px;font-size:9.54px;color:#4570ad;line-height:12px;-webkit-text-stroke:0.25px">7 days</div>
<div class="t" style="left:698.7px;top:220.6px;font-size:9.6px;color:#4570ad;line-height:12px;-webkit-text-stroke:0.25px">31 days</div>
<div class="a" style="left:754px;top:211.2px;width:139.5px;height:29px;border:1px solid #a9c1e0;border-radius:3px"></div>
<svg class="a" style="left:759px;top:217.5px" width="17" height="17" viewBox="0 0 17 17"><circle cx="8.6" cy="8.4" r="7" fill="none" stroke="#2e65ad" stroke-width="1.6"/><path d="M8.3 4.4 V8.8 L11.4 11.2" stroke="#2e65ad" stroke-width="1.5" fill="none"/></svg>
<div class="t" style="left:785.9px;top:212.6px;font-size:8.2px;color:#4f6fa6;line-height:11px">From:</div>
<div class="t" style="left:810.3px;top:212.6px;font-size:8.37px;color:#4f6fa6;line-height:11px">10/14/2024 10:44 AM</div>
<div class="t" style="left:796.6px;top:229.5px;font-size:8.2px;color:#4f6fa6;line-height:11px">To:</div>
<div class="t" style="left:810.3px;top:229.5px;font-size:8.37px;color:#4f6fa6;line-height:11px">10/15/2024 10:44 AM</div>
<div class="a" style="left:928px;top:215.6px;width:20.5px;height:9px;border-radius:4.5px;background:#9e9e9e"></div>
<div class="a" style="left:925px;top:214.2px;width:11.6px;height:11.6px;border-radius:50%;background:#fafafa;box-shadow:0 1px 2px rgba(0,0,0,0.35)"></div>
<div class="t" style="left:907.8px;top:230.6px;font-size:9.6px;color:#222;line-height:12px">Display events</div>
<div class="a" style="left:576.6px;top:258.2px;width:423.4px;height:340px;background:#fff;border-radius:4px"></div>
<div class="t" style="left:674.8px;top:274.3px;font-size:10.89px;color:#222;line-height:13px">Anomaly_AVV_Centreon_Prod_MBI - Conne...</div>
<svg class="a" style="left:929.5px;top:274.5px" width="13" height="13" viewBox="0 0 13 13"><path d="M5.5 1.5 H2.2 A1 1 0 0 0 1.2 2.5 V10.8 A1 1 0 0 0 2.2 11.8 H10.5 A1 1 0 0 0 11.5 10.8 V7.5" stroke="#2e65ad" stroke-width="1.4" fill="none"/><path d="M7.6 1.2 H11.8 V5.4 M11.6 1.4 L5.6 7.4" stroke="#2e65ad" stroke-width="1.4" fill="none"/></svg>
<svg class="a" style="left:953.5px;top:274.5px" width="13" height="13" viewBox="0 0 13 13"><path d="M6.5 1 V8.2 M3.4 5.2 L6.5 8.3 L9.6 5.2" stroke="#2e65ad" stroke-width="1.4" fill="none"/><path d="M1.2 8 V11.3 H11.8 V8" stroke="#2e65ad" stroke-width="1.4" fill="none"/></svg>
<svg class="a" style="left:977.5px;top:274px" width="14" height="14" viewBox="0 0 24 24"><path fill="#2e65ad" d="M22.7 19l-9.1-9.1c.9-2.3.4-5-1.5-6.9-2-2-5-2.4-7.4-1.3L9 6 6 9 1.6 4.7C.4 7.1.9 10.1 2.9 12.1c1.9 1.9 4.6 2.4 6.9 1.5l9.1 9.1c.4.4 1 .4 1.4 0l2.3-2.3c.5-.4.5-1.1.1-1.4z"/></svg>

<!--CHART-->
<svg class="a" style="left:0;top:0" width="1024" height="586" viewBox="0 0 1024 586">
<path d="M619.3 333.70 H956.8 M619.3 350.00 H956.8 M619.3 366.30 H956.8 M619.3 382.60 H956.8 M619.3 398.90 H956.8 M619.3 415.20 H956.8 M619.3 431.50 H956.8 M619.3 447.80 H956.8 M619.3 464.10 H956.8 M619.3 480.40 H956.8 M619.3 496.70 H956.8 M650.4 333.70 V513.00 M692.6 333.70 V513.00 M735.5 333.70 V513.00 M777.1 333.70 V513.00 M819.7 333.70 V513.00 M861.9 333.70 V513.00 M904.6 333.70 V513.00 M946.7 333.70 V513.00" stroke="#e6e6e6" stroke-width="1" fill="none"/>
<path d="M619.3 333.70 V513.60 H956.8" stroke="#333" stroke-width="1.3" fill="none"/>
<path d="M615.8 333.70 H619.3 M615.8 350.00 H619.3 M615.8 366.30 H619.3 M615.8 382.60 H619.3 M615.8 398.90 H619.3 M615.8 415.20 H619.3 M615.8 431.50 H619.3 M615.8 447.80 H619.3 M615.8 464.10 H619.3 M615.8 480.40 H619.3 M615.8 496.70 H619.3 M615.8 513.00 H619.3 M650.4 513.00 V519.00 M692.6 513.00 V519.00 M735.5 513.00 V519.00 M777.1 513.00 V519.00 M819.7 513.00 V519.00 M861.9 513.00 V519.00 M904.6 513.00 V519.00 M946.7 513.00 V519.00" stroke="#333" stroke-width="1" fill="none"/>
<text x="616.6999999999999" y="336.90" text-anchor="end" font-size="8.7" fill="#333" font-family="Liberation Sans">20</text>
<text x="616.6999999999999" y="353.20" text-anchor="end" font-size="8.7" fill="#333" font-family="Liberation Sans">18</text>
<text x="616.6999999999999" y="369.50" text-anchor="end" font-size="8.7" fill="#333" font-family="Liberation Sans">16</text>
<text x="616.6999999999999" y="385.80" text-anchor="end" font-size="8.7" fill="#333" font-family="Liberation Sans">14</text>
<text x="616.6999999999999" y="402.10" text-anchor="end" font-size="8.7" fill="#333" font-family="Liberation Sans">12</text>
<text x="616.6999999999999" y="418.40" text-anchor="end" font-size="8.7" fill="#333" font-family="Liberation Sans">10</text>
<text x="616.6999999999999" y="434.70" text-anchor="end" font-size="8.7" fill="#333" font-family="Liberation Sans">8</text>
<text x="616.6999999999999" y="451.00" text-anchor="end" font-size="8.7" fill="#333" font-family="Liberation Sans">6</text>
<text x="616.6999999999999" y="467.30" text-anchor="end" font-size="8.7" fill="#333" font-family="Liberation Sans">4</text>
<text x="616.6999999999999" y="483.60" text-anchor="end" font-size="8.7" fill="#333" font-family="Liberation Sans">2</text>
<text x="616.6999999999999" y="499.90" text-anchor="end" font-size="8.7" fill="#333" font-family="Liberation Sans">0</text>
<text x="616.6999999999999" y="516.20" text-anchor="end" font-size="8.7" fill="#333" font-family="Liberation Sans">-2</text>
<text x="650.4" y="528.4" text-anchor="middle" font-size="8.7" fill="#333" font-family="Liberation Sans">1:00 PM</text>
<text x="692.6" y="528.4" text-anchor="middle" font-size="8.7" fill="#333" font-family="Liberation Sans">4:00 PM</text>
<text x="735.5" y="528.4" text-anchor="middle" font-size="8.7" fill="#333" font-family="Liberation Sans">7:00 PM</text>
<text x="777.1" y="528.4" text-anchor="middle" font-size="8.7" fill="#333" font-family="Liberation Sans">10:00 PM</text>
<text x="819.7" y="528.4" text-anchor="middle" font-size="8.7" fill="#333" font-family="Liberation Sans">1:00 AM</text>
<text x="861.9" y="528.4" text-anchor="middle" font-size="8.7" fill="#333" font-family="Liberation Sans">4:00 AM</text>
<text x="904.6" y="528.4" text-anchor="middle" font-size="8.7" fill="#333" font-family="Liberation Sans">7:00 AM</text>
<text x="946.7" y="528.4" text-anchor="middle" font-size="8.7" fill="#333" font-family="Liberation Sans">10:00 AM</text>
<path d="M619.3 495.6 L640 497.2 H845 L856 496.4 H956.8" stroke="#7f9f84" stroke-width="1.4" fill="none"/>
<path d="M619.3 497.8 H632" stroke="#f07f9a" stroke-width="1.1" fill="none"/>
<path d="M619.3 488.9 H840.4 V349.8 H952.5 V484 Q952.8 488.9 956.5 488.9" stroke="#ff5ec4" stroke-width="1.3" fill="none"/>
<path d="M635.6 488.9 H832 M861 349.9 H933.5 L945.5 352.2" stroke="#ec9478" stroke-width="1.25" fill="none"/>
<path d="M619.3 396.8 L635.6 488.6 M832.3 488.7 L861 350.1 M945.5 352.2 L956 389.5" stroke="#a9bd8c" stroke-width="1.5" fill="none"/>
<path d="M619.3 396.5 L635.6 488.4 M832.3 488.7 L860.8 350.2 M945.5 352.2 L956 389.5" stroke="#78b4e4" stroke-width="0.8" stroke-dasharray="1.5 2.5" fill="none"/>
<path d="M860.6 347.7 H931 L943.3 349 L956 388.5" stroke="#6ab0ea" stroke-width="1.3" stroke-dasharray="3 0.7" fill="none"/>
<path d="M861 351.2 H933.5 L945.5 353.4" stroke="#7cbcee" stroke-width="1.1" stroke-dasharray="3 0.7" fill="none"/>
<path d="M619.3 488.9 H635.6 M840.4 349.8 H860.6" stroke="#ff5ec4" stroke-width="1.3" stroke-dasharray="2 1.2" fill="none"/>
</svg>
<div class="a" style="left:586.1px;top:541.1px;width:7.7px;height:39.9px;background:#1e88d8"></div>
<div class="lg" style="left:597.4px;top:543px">Lower Threshold</div>
<div class="lg" style="left:597.4px;top:560.0px">Min: <b>N/A</b>&nbsp; Max: <b>N/A</b></div>
<div class="lg" style="left:597.4px;top:572.6px">Avg: <b>N/A</b></div>
<div class="a" style="left:723.5px;top:541.1px;width:7.7px;height:39.9px;background:#1e88d8"></div>
<div class="lg" style="left:734.8px;top:543px">Upper Threshold</div>
<div class="lg" style="left:734.8px;top:560.0px">Min: <b>N/A</b>&nbsp; Max: <b>N/A</b></div>
<div class="lg" style="left:734.8px;top:572.6px">Avg: <b>N/A</b></div>
<div class="a" style="left:860px;top:541.1px;width:7.7px;height:39.9px;background:#ef0a8c"></div>
<div class="lg" style="left:871.3px;top:543px">threads.connected.count</div>
<div class="lg" style="left:871.3px;top:560.0px">Min: <b>1</b></div>
<div class="lg" style="left:871.3px;top:572.6px">Avg: <b>6.69</b></div>
<div class="lg" style="left:908.4px;top:560px">Max: <b>18</b></div>

<!--/CHART-->
<!--/PANEL-->
</body></html>
